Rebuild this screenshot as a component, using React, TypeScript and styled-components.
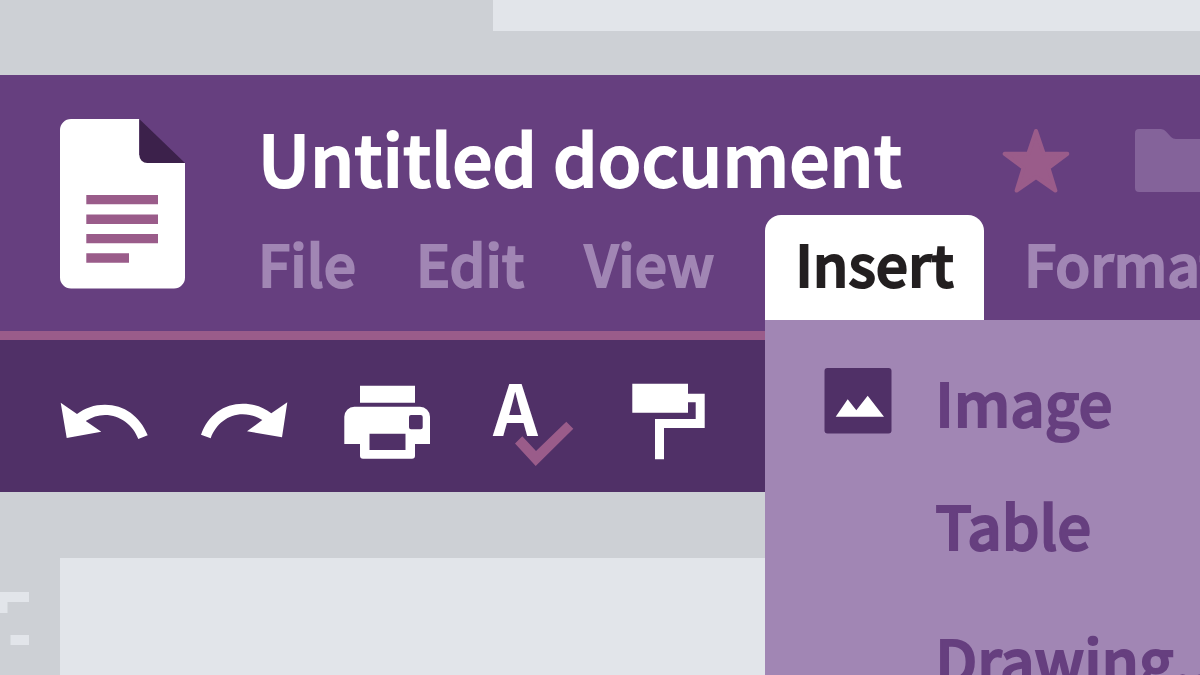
import React from "react";
import styled, { createGlobalStyle } from "styled-components";

const color = {
  desk: "#cdd0d5",
  sheet: "#e2e5ea",
  header: "#663f7f",
  toolbar: "#503067",
  accent: "#9a5c8a",
  lilac: "#a186b4",
  folder: "#84639a",
  fold: "#3c214b",
  ink: "#231f20",
  white: "#ffffff",
};

const GlobalStyle = createGlobalStyle`
  *, *::before, *::after { box-sizing: border-box; }
  body {
    margin: 0;
    background: ${color.desk};
    font-family: "Noto Sans CJK SC", "Noto Sans CJK JP", sans-serif;
    font-weight: 500;
    -webkit-text-stroke: 2px currentColor;
  }
  button {
    border: 0;
    margin: 0;
    padding: 0;
    background: none;
    font: inherit;
    color: inherit;
    cursor: pointer;
  }
  svg { display: block; }
`;

const Screen = styled.div`
  display: flex;
  flex-direction: column;
  height: 100vh;
  overflow: hidden;
`;

const PreviousSheet = styled.div`
  flex: none;
  height: 31px;
  margin: 0 0 44px 493px;
  background: ${color.sheet};
`;

const Header = styled.header`
  flex: none;
  display: flex;
  gap: 73px;
  padding: 43px 0 11px 59px;
  background: ${color.header};
  border-bottom: 9px solid ${color.accent};
`;

const DocLogo = styled.svg`
  flex: none;
  width: 126px;
  height: 171px;
`;

const HeaderMain = styled.div`
  flex: 1;
  min-width: 0;
`;

const TitleRow = styled.div`
  display: flex;
  align-items: flex-start;
  height: 97px;
`;

const Title = styled.h1`
  flex: none;
  margin: 0 99px 0 0;
  font-size: 71px;
  line-height: 76px;
  font-weight: 500;
  color: ${color.white};
  white-space: nowrap;
`;

const TitleButton = styled.button`
  flex: none;
  margin: 9px 64px 0 0;
`;

const MenuBar = styled.nav`
  display: flex;
  margin-left: -30px;
`;

const MenuSlot = styled.div<{ $open?: boolean }>`
  flex: none;
  position: relative;
  margin: ${(p) => (p.$open ? "0 10px 0 21px" : "0")};
`;

const MenuButton = styled.button<{ $open?: boolean }>`
  display: block;
  padding: 0 30px 11px;
  font-size: 57px;
  line-height: 94px;
  white-space: nowrap;
  border-radius: 16px 16px 0 0;
  color: ${(p) => (p.$open ? color.ink : color.lilac)};
  background: ${(p) => (p.$open ? color.white : "transparent")};
`;

const Dropdown = styled.div`
  position: absolute;
  z-index: 2;
  top: 100%;
  left: 0;
  display: flex;
  flex-direction: column;
  gap: 11px;
  width: 560px;
  padding: 19px 0;
  background: ${color.lilac};
`;

const ItemGroup = styled.div`
  display: flex;
  flex-direction: column;
`;

const Item = styled.button`
  display: grid;
  grid-template-columns: 68px 1fr;
  column-gap: 43px;
  align-items: center;
  padding: 0 59px;
  font-size: 60px;
  line-height: 123px;
  text-align: left;
  white-space: nowrap;
  color: ${color.header};
`;

const ItemLabel = styled.span`
  grid-column: 2;
`;

const Toolbar = styled.div`
  flex: none;
  display: flex;
  gap: 48px;
  padding: 24px 56px;
  background: ${color.toolbar};
`;

const Tool = styled.button`
  flex: none;
  color: ${color.white};
`;

const ToolGlyph = styled.svg`
  width: 96px;
  height: 104px;
  fill: currentColor;
`;

const ToolLetter = styled.text`
  font-size: 70px;
  font-weight: 700;
`;

const Workspace = styled.main`
  flex: 1;
  display: flex;
  padding-top: 66px;
`;

const Margin = styled.div`
  flex: none;
  width: 60px;
  padding-top: 34px;
`;

const Sheet = styled.div`
  flex: 1;
  background: ${color.sheet};
`;

const tools = [
  {
    label: "Undo",
    art: (
      <path d="M4.7 38.7 L10.7 74 L45.3 67.7 L29.7 57 C36 53 42 51 49 51 C64 51 77 61 82.3 75 L91.7 71.3 C84 52 68 40.7 49 40.7 C38 40.7 29 44 21 50 Z" />
    ),
  },
  {
    label: "Redo",
    art: (
      <path d="M87.3 38.3 L82 73.3 L47 67.3 L62.3 56 C56 52.3 50 50.3 42.7 50.3 C28 50.3 16 60 10.7 74.3 L1 70.7 C8 51 24 39.7 42.7 39.7 C54 39.7 63 43 71.3 49.3 Z" />
    ),
  },
  {
    label: "Print",
    art: (
      <>
        <path d="M16 21.7 H71 V38.7 H16 Z" />
        <path
          fillRule="evenodd"
          d="M10.3 42.7 H76 A10 10 0 0 1 86 52.7 V80 H71 V91.7 A3 3 0 0 1 68 94.7 H19 A3 3 0 0 1 16 91.7 V80 H0.3 V52.7 A10 10 0 0 1 10.3 42.7 Z M25.5 69.7 V86 H61.5 V69.7 Z M67 51 A2 2 0 0 0 65 53 V63.2 A2 2 0 0 0 67 65.2 H76.7 A2 2 0 0 0 78.7 63.2 V53 A2 2 0 0 0 76.7 51 Z"
        />
      </>
    ),
  },
  {
    label: "Spelling check",
    art: (
      <>
        <ToolLetter x="5" y="72">
          A
        </ToolLetter>
        <path
          fill={color.accent}
          d="M27 79.5 L34.3 72.3 L48 87 L78.3 57.7 L85.3 64.7 L47.7 102 Z"
        />
      </>
    ),
  },
  {
    label: "Paint format",
    art: (
      <path d="M0.3 19.7 H56 V29.7 H72.7 V64 H32 V95.3 H23 V55 H63.7 V38.3 H56 V48.7 H0.3 Z" />
    ),
  },
];

function InsertMenu() {
  return (
    <Dropdown role="menu" aria-label="Insert">
      <ItemGroup role="group">
        <Item role="menuitem">
          <svg width="68" height="66" viewBox="0 0 68 66" aria-hidden="true">
            <rect x="0.5" y="0" width="67" height="65.5" rx="3" fill={color.toolbar} />
            <path d="M11.7 48.7 L23.7 31.3 L32.3 42.3 L43.7 27.7 L60 48.7 Z" fill={color.white} />
          </svg>
          <ItemLabel>Image</ItemLabel>
        </Item>
        <Item role="menuitem">
          <ItemLabel>Table</ItemLabel>
        </Item>
      </ItemGroup>
      <ItemGroup role="group">
        <Item role="menuitem">
          <ItemLabel>Drawing...</ItemLabel>
        </Item>
      </ItemGroup>
    </Dropdown>
  );
}

export default function App() {
  return (
    <>
      <GlobalStyle />
      <Screen>
        <PreviousSheet />
        <Header>
          <DocLogo viewBox="0 0 126 171" aria-hidden="true">
            <path
              fill={color.white}
              d="M12 1 H80.3 V45 H126 V159.5 A11 11 0 0 1 115 170.5 H12 A11 11 0 0 1 1 159.5 V12 A11 11 0 0 1 12 1 Z"
            />
            <path fill={color.white} d="M80 37 H90 V46 H80 Z" />
            <path fill={color.fold} d="M80.3 1 L126 45 H88.3 A8 8 0 0 1 80.3 37 Z" />
            <path
              fill={color.accent}
              d="M27.3 77 H99 V86.3 H27.3 Z M27.3 96.5 H99 V106 H27.3 Z M27.3 116 H99 V125.3 H27.3 Z M27.3 135.3 H70 V144.7 H27.3 Z"
            />
          </DocLogo>
          <HeaderMain>
            <TitleRow>
              <Title>Untitled document</Title>
              <TitleButton aria-label="Star">
                <svg width="70" height="68" viewBox="0 0 70 68" aria-hidden="true">
                  <path
                    fill={color.accent}
                    stroke={color.accent}
                    strokeWidth="4"
                    strokeLinejoin="round"
                    d="M35 4 L42.6 26.5 L66.3 26.8 L47.5 41 L54.4 63.5 L35 50 L15.6 63.5 L22.5 41 L3.7 26.8 L27.4 26.5 Z"
                  />
                </svg>
              </TitleButton>
              <TitleButton aria-label="Move to folder">
                <svg width="84" height="68" viewBox="0 0 84 68" aria-hidden="true">
                  <path
                    fill={color.folder}
                    d="M4 2 H26 Q29 2 31 4.500 L36 10 Q38 12 41 12 H81 Q84 12 84 15 V62 Q84 65 81 65 H4 Q0 65 0 61 V6 Q0 2 4 2 Z"
                  />
                </svg>
              </TitleButton>
            </TitleRow>
            <MenuBar aria-label="Document menus">
              <MenuSlot>
                <MenuButton>File</MenuButton>
              </MenuSlot>
              <MenuSlot>
                <MenuButton>Edit</MenuButton>
              </MenuSlot>
              <MenuSlot>
                <MenuButton>View</MenuButton>
              </MenuSlot>
              <MenuSlot $open>
                <MenuButton $open aria-haspopup="menu" aria-expanded="true">
                  Insert
                </MenuButton>
                <InsertMenu />
              </MenuSlot>
              <MenuSlot>
                <MenuButton>Format</MenuButton>
              </MenuSlot>
            </MenuBar>
          </HeaderMain>
        </Header>
        <Toolbar role="toolbar" aria-label="Editing tools">
          {tools.map((tool) => (
            <Tool key={tool.label} aria-label={tool.label}>
              <ToolGlyph viewBox="0 0 96 104" aria-hidden="true">
                {tool.art}
              </ToolGlyph>
            </Tool>
          ))}
        </Toolbar>
        <Workspace>
          <Margin>
            <svg width="30" height="54" viewBox="0 0 30 54" aria-hidden="true">
              <path fill={color.sheet} d="M0 0 H29 V10 H7.500 V21 H0 Z M10.500 43 H29 V53 H10.500 Z" />
            </svg>
          </Margin>
          <Sheet />
        </Workspace>
      </Screen>
    </>
  );
}
